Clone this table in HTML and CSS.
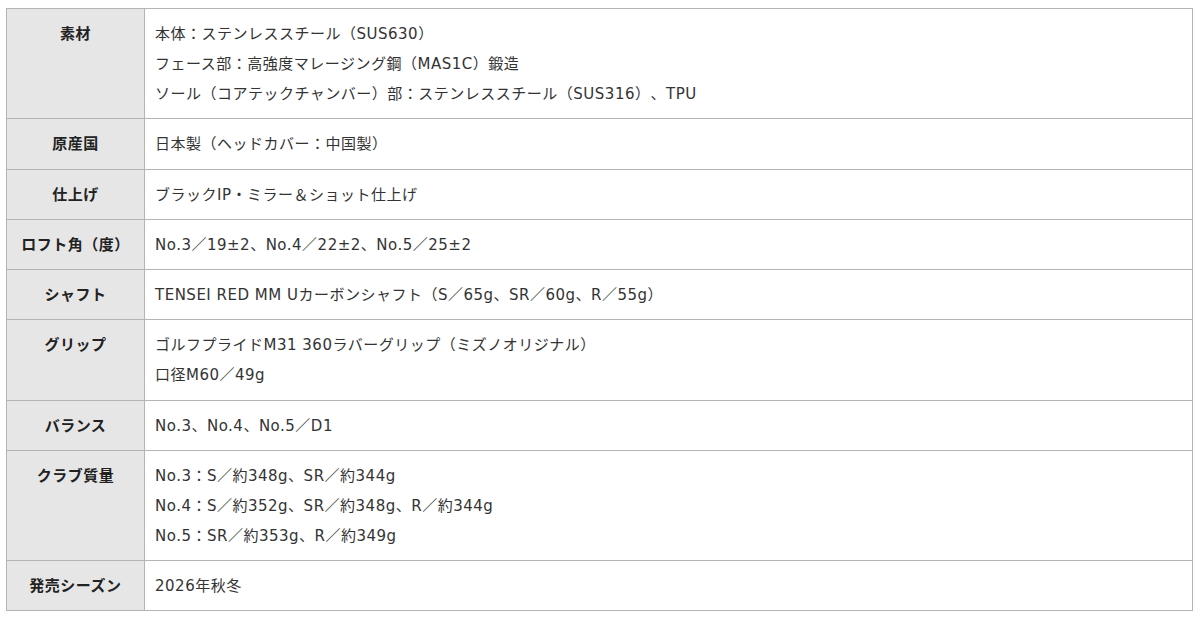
FILE: index.html
```html
<!DOCTYPE html>
<html lang="ja">
<head>
<meta charset="utf-8">
<link rel="stylesheet" href="styles.css">
</head>
<body>
<table class="spec">
<tbody>
<tr><th>素材</th><td>本体：ステンレススチール（SUS630）<br>フェース部：高強度マレージング鋼（MAS1C）鍛造<br>ソール（コアテックチャンバー）部：ステンレススチール（SUS316）、TPU</td></tr>
<tr><th>原産国</th><td>日本製（ヘッドカバー：中国製）</td></tr>
<tr><th>仕上げ</th><td>ブラックIP・ミラー＆ショット仕上げ</td></tr>
<tr><th>ロフト角（度）</th><td>No.3／19±2、No.4／22±2、No.5／25±2</td></tr>
<tr><th>シャフト</th><td>TENSEI RED MM Uカーボンシャフト（S／65g、SR／60g、R／55g）</td></tr>
<tr><th>グリップ</th><td>ゴルフプライドM31 360ラバーグリップ（ミズノオリジナル）<br>口径M60／49g</td></tr>
<tr><th>バランス</th><td>No.3、No.4、No.5／D1</td></tr>
<tr><th>クラブ質量</th><td>No.3：S／約348g、SR／約344g<br>No.4：S／約352g、SR／約348g、R／約344g<br>No.5：SR／約353g、R／約349g</td></tr>
<tr><th>発売シーズン</th><td>2026年秋冬</td></tr>
</tbody>
</table>
</body>
</html>
```
FILE: styles.css
```css
html, body {
  margin: 0;
  background: #ffffff;
}
body {
  padding: 8px 7px 0 6px;
  font-family: "DejaVu Sans", "Noto Sans CJK JP", sans-serif;
  font-size: 15px;
  color: #333333;
}
.spec {
  width: 100%;
  border-collapse: collapse;
  border: 1px solid #b4b4b4;
}
.spec th,
.spec td {
  border: 1px solid #b4b4b4;
  padding: 10px 10px 9.25px;
  line-height: 30px;
  vertical-align: top;
  letter-spacing: 0.5px;
  text-spacing-trim: space-all;
}
.spec th {
  width: 117px;
  background: #e6e6e6;
  font-weight: bold;
  text-align: center;
  color: #222222;
}
.spec td {
  text-align: left;
}
```
